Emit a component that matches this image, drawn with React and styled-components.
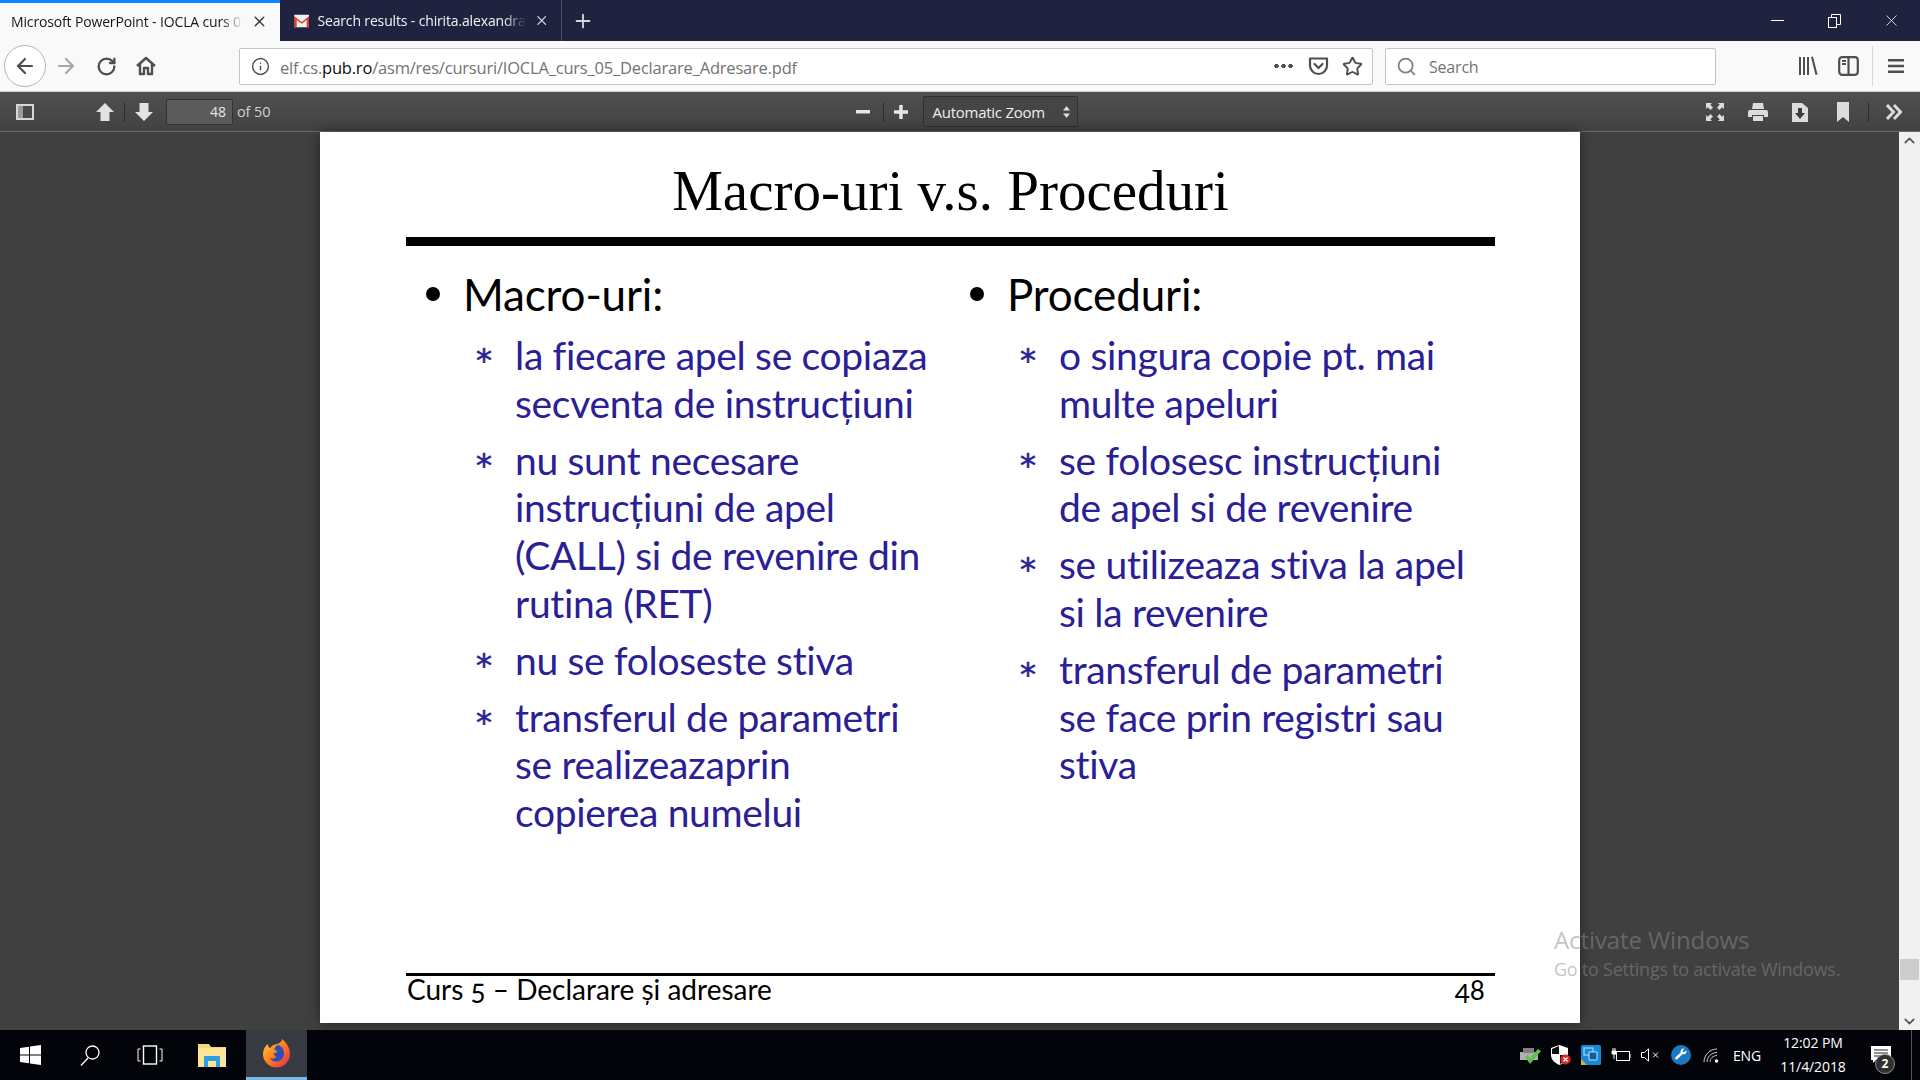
import styled, { createGlobalStyle } from "styled-components";
import { X, Plus, ArrowLeft, ArrowRight, RotateCw, Info, Star, Search, ChevronUp, ChevronDown } from "lucide-react";

const Global = createGlobalStyle`
  html, body { margin: 0; padding: 0; background: #404040; }
  * { box-sizing: border-box; }
`;

const uiFont = `"Open Sans", "Noto Sans", "Liberation Sans", sans-serif`;
const slideFont = `Lato, "Noto Sans", sans-serif`;

const Screen = styled.div`
  width: 1920px;
  height: 1080px;
  position: relative;
  overflow: hidden;
  display: flex;
  flex-direction: column;
  font-family: ${uiFont};
`;

/* tabs */
const TabStrip = styled.div`
  height: 41px;
  flex: none;
  background: #202340;
  display: flex;
  align-items: stretch;
`;
const Tab = styled.div`
  width: ${(p) => (p.$active ? "280px" : "282px")};
  display: flex;
  align-items: center;
  gap: 8px;
  padding: ${(p) => (p.$active ? "0 12px 2px 11px" : "0 12px 0 14px")};
  color: ${(p) => (p.$active ? "#17171a" : "#f2f2f6")};
  background: ${(p) => (p.$active ? "#f9f9fa" : "transparent")};
  border-top: ${(p) => (p.$active ? "3px solid #0a84ff" : "none")};
  border-right: ${(p) => (p.$active ? "none" : "1px solid #4a4d68")};
  font-size: 14px;
`;
const TabTitle = styled.span`
  flex: 1;
  white-space: nowrap;
  letter-spacing: -0.15px;
  -webkit-mask-image: linear-gradient(to left, transparent, #000 22px);
  mask-image: linear-gradient(to left, transparent, #000 22px);
`;
const NewTab = styled.div`
  width: 42px;
  display: flex;
  align-items: center;
  justify-content: center;
  color: #d6d6de;
`;
const WindowControls = styled.div`
  margin-left: auto;
  display: flex;
  align-items: center;
  color: #fff;
`;
const WindowButton = styled.div`
  width: 57px;
  display: flex;
  justify-content: center;
`;

/* nav toolbar */
const NavBar = styled.div`
  height: 51px;
  flex: none;
  background: #f9f9fa;
  border-bottom: 1px solid #d2d2d4;
  display: flex;
  align-items: center;
  padding-left: 4px;
  color: #4e4e52;
`;
const BackButton = styled.div`
  width: 42px;
  height: 42px;
  border-radius: 50%;
  border: 1px solid #b5b5b8;
  background: #fff;
  display: flex;
  align-items: center;
  justify-content: center;
`;
const NavIcon = styled.div`
  width: ${(p) => p.$w || 40}px;
  margin-left: ${(p) => p.$ml || 0}px;
  display: flex;
  justify-content: center;
  color: ${(p) => p.$color || "inherit"};
`;
const UrlBar = styled.div`
  height: 37px;
  background: #fff;
  border: 1px solid #c4c4c6;
  border-radius: 2px;
  display: flex;
  align-items: center;
  width: ${(p) => p.$w}px;
  margin-left: ${(p) => p.$ml}px;
`;
const UrlText = styled.div`
  font-size: 16.5px;
  letter-spacing: -0.2px;
  color: #737373;
  white-space: nowrap;
  flex: 1;
  padding-top: 2px;
  b { font-weight: 400; color: #0c0c0d; }
`;
const SearchText = styled.span`
  margin-left: 6px;
  padding-top: 2px;
  font-size: 16px;
  letter-spacing: -0.2px;
  color: #737373;
`;
const Dots = styled.span`
  width: 20px;
  height: 4px;
  margin-right: 15px;
  background: radial-gradient(circle, #4e4e52 2px, transparent 2.4px) 0 0 / 7px 4px repeat-x;
`;
const PocketSlot = styled.span`
  display: flex;
  margin-right: 3px;
`;
const ToolDivider = styled.div`
  width: 1px;
  height: 40px;
  background: #d8d8da;
  margin: 0 15px 0 4px;
`;

/* pdf toolbar */
const PdfBar = styled.div`
  height: 40px;
  flex: none;
  background: linear-gradient(#505050, #424242);
  border-bottom: 1px solid #6a6a6a;
  display: flex;
  align-items: center;
  color: #d9d9d9;
  font-size: 14px;
`;
const PdfIcon = styled.div`
  display: flex;
  margin-left: ${(p) => p.$ml}px;
`;
const PdfSep = styled.div`
  width: 1px;
  height: 20px;
  background: #2c2c2c;
  margin-left: ${(p) => p.$ml}px;
`;
const PageInput = styled.div`
  width: 67px;
  height: 26px;
  margin-left: 13px;
  background: #5a5a5a;
  border: 1px solid #333;
  border-radius: 2px;
  text-align: right;
  padding-right: 6px;
  line-height: 24px;
  color: #e6e6e6;
`;
const PageCount = styled.span`
  margin-left: 4px;
  color: #cfcfcf;
  font-size: 14.5px;
  letter-spacing: -0.1px;
`;
const ZoomSelect = styled.div`
  width: 155px;
  height: 31px;
  margin-left: 15px;
  background: #454545;
  border: 1px solid #303030;
  border-radius: 2px;
  display: flex;
  align-items: center;
  justify-content: space-between;
  padding: 0 7px 0 8px;
  color: #eee;
  font-size: 15px;
  letter-spacing: -0.25px;
`;

/* viewer */
const Viewer = styled.div`
  flex: 1;
  min-height: 0;
  display: flex;
`;
const Canvas = styled.div`
  flex: 1;
  background: #404040;
  padding-left: 320px;
`;
const Slide = styled.div`
  width: 1260px;
  height: 891px;
  background: #fff;
  box-shadow: 0 0 12px rgba(0, 0, 0, 0.45);
  padding: 0 85px 0 86px;
  display: flex;
  flex-direction: column;
`;
const SlideTitle = styled.h1`
  margin: 29px 0 0;
  height: 76px;
  text-align: center;
  font: 400 57px/60px "Liberation Serif", serif;
  color: #000;
`;
const TitleRule = styled.div`
  height: 9px;
  background: #000;
  flex: none;
`;
const Columns = styled.div`
  display: grid;
  grid-template-columns: 544px 1fr;
  padding-top: 23px;
  flex: 1;
`;
const Heading = styled.div`
  display: flex;
  align-items: center;
  height: 50px;
  color: #000;
  font: 400 44px/50px ${slideFont};
  letter-spacing: -0.15px;
  &::before {
    content: "";
    width: 14px;
    height: 14px;
    border-radius: 50%;
    background: #000;
    margin: 0 23px 0 20px;
  }
`;
const Items = styled.ul`
  list-style: none;
  margin: 13px 0 0;
  padding: 0 0 0 72px;
`;
const Item = styled.li`
  position: relative;
  padding-left: 37px;
  margin-bottom: 9px;
  color: #2a2095;
  font: 400 39px/47.8px ${slideFont};
  letter-spacing: -0.32px;
  white-space: pre;
  &::before {
    content: "*";
    position: absolute;
    left: -2px;
    top: 5px;
    font: 400 32px/47.8px "DejaVu Sans", sans-serif;
    -webkit-text-stroke: 0.6px #2a2095;
  }
`;
const SlideFooter = styled.div`
  border-top: 3px solid #000;
  height: 50px;
  display: flex;
  justify-content: space-between;
  color: #000;
  font: 400 28px/27px ${slideFont};
  font-variant-numeric: oldstyle-nums;
  padding: 0 10px 0 1px;
`;
const Scrollbar = styled.div`
  width: 21px;
  background: #f1f1f1;
  display: flex;
  flex-direction: column;
  justify-content: space-between;
  align-items: center;
  color: #505050;
`;
const ScrollThumb = styled.div`
  width: 19px;
  height: 21px;
  background: #cdcdcd;
  margin-top: auto;
  margin-bottom: 33px;
`;

/* taskbar */
const Taskbar = styled.div`
  height: 50px;
  flex: none;
  background: #03040a;
  display: flex;
  align-items: center;
  color: #fff;
`;
const TaskSlot = styled.div`
  display: flex;
  align-items: center;
  justify-content: center;
  width: ${(p) => p.$w}px;
  margin-left: ${(p) => p.$ml || 0}px;
`;
const ActiveSlot = styled(TaskSlot)`
  height: 50px;
  background: #383a42;
  border-bottom: 3px solid #76b9ed;
`;
const Clock = styled.div`
  width: 90px;
  margin-left: 5px;
  text-align: center;
  font-size: 14px;
  line-height: 24px;
  letter-spacing: -0.1px;
`;
const Lang = styled.span`
  font-size: 14px;
  margin-left: 14px;
  width: 30px;
  letter-spacing: -0.2px;
`;
const NotifySlot = styled(TaskSlot)`
  position: relative;
  height: 30px;
`;
const NotifyBadge = styled.span`
  position: absolute;
  right: 1px;
  bottom: -4px;
  width: 20px;
  height: 20px;
  border-radius: 50%;
  background: #303030;
  border: 1px solid #888;
  font-size: 12px;
  font-weight: 700;
  line-height: 18px;
  text-align: center;
`;
const EdgeLine = styled.div`
  width: 1px;
  height: 50px;
  background: #555;
  margin-left: 15px;
`;

const Watermark = styled.div`
  position: absolute;
  left: 1554px;
  top: 924px;
  color: rgba(140, 140, 140, 0.52);
  pointer-events: none;
  white-space: nowrap;
`;
const WatermarkTitle = styled.div`
  font-size: 24px;
  line-height: 32px;
  letter-spacing: -0.1px;
`;
const WatermarkSub = styled.div`
  font-size: 18px;
  line-height: 26px;
  letter-spacing: -0.25px;
`;

const Gmail = () => (
  <svg width="17" height="14" viewBox="0 0 17 14">
    <rect width="17" height="14" rx="1" fill="#f1f1f1" />
    <path d="M0 1.5 8.5 8 17 1.5V14h-3V5.8L8.5 10 3 5.8V14H0Z" fill="#d6402f" />
  </svg>
);
const Home = () => (
  <svg width="22" height="22" viewBox="0 0 22 22" fill="none" stroke="currentColor" strokeWidth="2.4">
    <path d="M2 11 11 3l9 8M5 9v10h4v-6h4v6h4V9" strokeLinejoin="round" />
  </svg>
);
const Pocket = () => (
  <svg width="21" height="21" viewBox="0 0 21 21" fill="none" stroke="currentColor" strokeWidth="2.2">
    <path d="M2 2.5h17v7a8.5 8.5 0 0 1-17 0Z" strokeLinejoin="round" />
    <path d="m6.5 8 4 4 4-4" strokeLinecap="round" />
  </svg>
);
const Library = () => (
  <svg width="20" height="22" viewBox="0 0 20 22" fill="currentColor">
    <path d="M1 2h2v18H1zM5 2h2v18H5zM9 2h2v18H9zM13 2l2-.5L19.5 19.5l-2 .5z" />
  </svg>
);
const SidebarIcon = () => (
  <svg width="21" height="20" viewBox="0 0 21 20" fill="none" stroke="currentColor" strokeWidth="2.2">
    <rect x="1.2" y="1.2" width="18.6" height="17.6" rx="3" />
    <path d="M10.5 1v18" />
    <path d="M4 5h4M4 8h4" />
  </svg>
);
const Burger = () => (
  <svg width="16" height="16" viewBox="0 0 16 16" fill="currentColor">
    <path d="M0 1h16v2.4H0zM0 6.8h16v2.4H0zM0 12.6h16V15H0z" />
  </svg>
);
const PdfSidebar = () => (
  <svg width="18" height="16" viewBox="0 0 18 16">
    <rect x="1" y="1" width="16" height="14" fill="none" stroke="#d6d6d6" strokeWidth="2" />
    <rect x="2" y="2" width="5" height="12" fill="#9a9a9a" />
  </svg>
);
const UpArrow = () => (
  <svg width="18" height="18" viewBox="0 0 18 18" fill="#e2e2e2">
    <path d="M9 0 18 9h-4.500v9h-9V9H0Z" />
  </svg>
);
const DownArrow = () => (
  <svg width="18" height="18" viewBox="0 0 18 18" fill="#e2e2e2">
    <path d="M9 18 0 9h4.500V0h9v9H18Z" />
  </svg>
);
const Minus = () => (
  <svg width="14" height="14" viewBox="0 0 14 14" fill="#e6e6e6"><rect y="5" width="14" height="3.500" /></svg>
);
const PdfPlus = () => (
  <svg width="14" height="14" viewBox="0 0 14 14" fill="#e6e6e6"><path d="M5.200 0h3.500v5.200H14v3.500H8.700V14H5.200V8.700H0V5.200h5.200Z" /></svg>
);
const SelectArrows = () => (
  <svg width="7" height="12" viewBox="0 0 7 12" fill="#ddd"><path d="M3.500 0 7 4.500H0ZM3.500 12 0 7.500h7Z" /></svg>
);
const Fullscreen = () => (
  <svg width="18" height="18" viewBox="0 0 18 18" fill="#dcdcdc">
    <path d="M0 0h6L4.300 1.800 7 4.500 4.500 7 1.800 4.300 0 6ZM18 0v6l-1.800-1.700L13.500 7 11 4.500l2.700-2.700L12 0ZM0 18v-6l1.800 1.700L4.500 11 7 13.500l-2.700 2.700L6 18ZM18 18h-6l1.700-1.800L11 13.500l2.500-2.500 2.700 2.700L18 12Z" />
  </svg>
);
const Printer = () => (
  <svg width="20" height="18" viewBox="0 0 20 18" fill="#dcdcdc">
    <path d="M5 0h10l1 6H4ZM2 7h16a2 2 0 0 1 2 2v5h-4v-2H4v2H0V9a2 2 0 0 1 2-2ZM5 13h10v5H5Z" />
  </svg>
);
const Download = () => (
  <svg width="16" height="20" viewBox="0 0 16 20">
    <path d="M0 1h10l6 5v14H0Z" fill="#dcdcdc" />
    <path d="M6 6h4v5h3l-5 6-5-6h3Z" fill="#3c3c3c" />
  </svg>
);
const Bookmark = () => (
  <svg width="12" height="20" viewBox="0 0 12 20" fill="#dcdcdc"><path d="M0 0h12v20l-6-5-6 5Z" /></svg>
);
const DoubleChevron = () => (
  <svg width="18" height="16" viewBox="0 0 18 16" fill="none" stroke="#dcdcdc" strokeWidth="3">
    <path d="m2 1 6.500 7L2 15M9 1l6.500 7L9 15" />
  </svg>
);
const WindowsLogo = () => (
  <svg width="21" height="20" viewBox="0 0 21 20" fill="#fff">
    <path d="M0 3 9 1.700V9.500H0ZM10 1.500 21 0v9.500H10ZM0 10.500h9v7.800L0 17ZM10 10.500h11V20l-11-1.500Z" />
  </svg>
);
const TaskSearch = () => (
  <svg width="20" height="21" viewBox="0 0 20 21" fill="none" stroke="#fff" strokeWidth="1.300">
    <circle cx="12.500" cy="7.500" r="6.500" />
    <path d="M8 13 1 20.500" />
  </svg>
);
const TaskView = () => (
  <svg width="26" height="20" viewBox="0 0 26 20" fill="none" stroke="#fff" strokeWidth="1.400">
    <rect x="6.500" y="1" width="13" height="18" />
    <path d="M3.500 4H1v12h2.500M22.500 4H25v12h-2.500" strokeWidth="1" />
  </svg>
);
const Explorer = () => (
  <svg width="28" height="24" viewBox="0 0 28 24">
    <path d="M0 1h11l2 3h15v20H0Z" fill="#f5d77b" />
    <path d="M0 5h28v19H0Z" fill="#fbe59a" />
    <path d="M6 13h16v11h-4v-6h-8v6H6Z" fill="#2f9fe0" />
  </svg>
);
const Firefox = () => (
  <svg width="27" height="29" viewBox="0 0 27 29">
    <defs>
      <linearGradient id="fx" x1="0" y1="0" x2="1" y2="1">
        <stop offset="0" stopColor="#ffd43a" />
        <stop offset="0.5" stopColor="#ff7a1f" />
        <stop offset="1" stopColor="#e22850" />
      </linearGradient>
    </defs>
    <path d="M19 0c5 4 8 9 8 15a13.500 13.500 0 0 1-27 0C0 11 2 7 5 5c0 2 .5 3 2 4 2-3 5-3.500 7-4 3-1 5-2.500 5-5Z" fill="url(#fx)" />
    <path d="M15 6c3 .5 6 4 6 8.500 0 4.500-3.500 8-8 8-3 0-5-1.500-6-3.500 2 1 5 1 6-1 .5-1-2-1.500-2.500-3 1-1.500 4-1 4-3-2 0-3-1-3-2.500C12 8 13 7 15 6Z" fill="#2a4fb8" />
  </svg>
);
const TrayPrinter = () => (
  <svg width="21" height="18" viewBox="0 0 21 18">
    <path d="M0 6h15l3 3v5H0Z" fill="#b0b0b0" />
    <path d="M3 2h11v5H3Z" fill="#808080" />
    <path d="m5 11 2.500-2 2.500 3 8-9 3 2-11 13Z" fill="#62c04d" />
  </svg>
);
const Shield = () => (
  <svg width="20" height="20" viewBox="0 0 20 20">
    <path d="M8.500 0 17 3v7c0 5-4 8-8.500 10C4 18 0 15 0 10V3Z" fill="#fff" />
    <path d="M8 1v8H1V4ZM9 10h7c0 3-3 7-7 9Z" fill="#111" />
    <circle cx="14.500" cy="14.500" r="5" fill="#e3242b" />
    <path d="m12.500 12.500 4 4M16.500 12.500l-4 4" stroke="#fff" strokeWidth="1.400" />
  </svg>
);
const Intel = () => (
  <svg width="20" height="20" viewBox="0 0 20 20">
    <rect width="20" height="20" rx="1.500" fill="#1689d2" />
    <path d="M0 14 6 20H0Z" fill="#d8b03a" />
    <rect x="3" y="3" width="9" height="7" fill="none" stroke="#bfe4fa" strokeWidth="1" />
    <path d="M8 7h8v8H8Z" fill="#0c5f9e" stroke="#bfe4fa" strokeWidth="1" />
  </svg>
);
const Battery = () => (
  <svg width="20" height="14" viewBox="0 0 20 14" fill="none" stroke="#fff" strokeWidth="1">
    <rect x="5.500" y="3.500" width="13" height="9" />
    <path d="M19 6v4" />
    <path d="M2 0v3M4 0v3M1 3h4v3H1ZM3 6v5" fill="#fff" />
  </svg>
);
const Mute = () => (
  <svg width="19" height="14" viewBox="0 0 19 14" fill="none" stroke="#fff" strokeWidth="1">
    <path d="M.5 4.500h3L7.500.8v12.400l-4-3.700h-3Z" />
    <path d="m12 4.500 5 5M17 4.500l-5 5" />
  </svg>
);
const Wrench = () => (
  <svg width="20" height="20" viewBox="0 0 20 20">
    <circle cx="10" cy="10" r="10" fill="#1c78c0" />
    <path d="M15.500 5.500a3 3 0 0 1-3.800 3.600L6.500 14a1.300 1.300 0 0 1-2-1.700l5.200-4.900a3 3 0 0 1 3.600-3.700L11.500 6l1 1.300Z" fill="#fff" />
  </svg>
);
const Wifi = () => (
  <svg width="16" height="16" viewBox="0 0 16 16" fill="none" stroke="#cfcfcf" strokeWidth="1">
    <path d="M1 15C1 8 7 2 14 2M4 15c0-5 4.500-9.500 10-9.500M7 15c0-3.500 3-6.500 7-6.500" />
    <circle cx="13.500" cy="14" r="1.700" fill="#fff" stroke="none" />
  </svg>
);
const Notify = () => (
  <svg width="20" height="18" viewBox="0 0 20 18">
    <path d="M0 0h20v14H5l-3 3v-3H0Z" fill="#fff" />
    <path d="M3 4h14M3 7h14M3 10h9" stroke="#222" strokeWidth="1" />
  </svg>
);

const leftItems = [
  "la fiecare apel se copiaza\nsecventa de instrucțiuni",
  "nu sunt necesare\ninstrucțiuni de apel\n(CALL) si de revenire din\nrutina (RET)",
  "nu se foloseste stiva",
  "transferul de parametri\nse realizeazaprin\ncopierea numelui",
];
const rightItems = [
  "o singura copie pt. mai\nmulte apeluri",
  "se folosesc instrucțiuni\nde apel si de revenire",
  "se utilizeaza stiva la apel\nsi la revenire",
  "transferul de parametri\nse face prin registri sau\nstiva",
];

const App = () => {
  return (
    <Screen>
      <Global />
      <TabStrip>
        <Tab $active>
          <TabTitle>Microsoft PowerPoint - IOCLA curs 0</TabTitle>
          <X size={17} strokeWidth={2} color="#3a3a3e" />
        </Tab>
        <Tab>
          <Gmail />
          <TabTitle>Search results - chirita.alexandra</TabTitle>
          <X size={17} strokeWidth={2} color="#d8d8de" />
        </Tab>
        <NewTab>
          <Plus size={22} strokeWidth={2} />
        </NewTab>
        <WindowControls>
          <WindowButton>
            <svg width="13" height="2" viewBox="0 0 13 2" fill="#fff"><rect width="13" height="1" /></svg>
          </WindowButton>
          <WindowButton>
            <svg width="13" height="14" viewBox="0 0 13 14" fill="none" stroke="#fff"><rect x="0.500" y="3.500" width="8" height="10" /><path d="M3.500 3.500v-3h9v10h-4" /></svg>
          </WindowButton>
          <WindowButton>
            <X size={19} strokeWidth={1} />
          </WindowButton>
        </WindowControls>
      </TabStrip>

      <NavBar>
        <BackButton>
          <ArrowLeft size={24} strokeWidth={2.2} />
        </BackButton>
        <NavIcon $color="#a8a8aa"><ArrowRight size={24} strokeWidth={2.2} /></NavIcon>
        <NavIcon><RotateCw size={21} strokeWidth={2.6} /></NavIcon>
        <NavIcon><Home /></NavIcon>
        <UrlBar $w={1134} $ml={73}>
          <NavIcon><Info size={19} strokeWidth={1.8} /></NavIcon>
          <UrlText>
            elf.cs.<b>pub.ro</b>/asm/res/cursuri/IOCLA_curs_05_Declarare_Adresare.pdf
          </UrlText>
          <Dots />
          <PocketSlot><Pocket /></PocketSlot>
          <NavIcon><Star size={21} strokeWidth={2.2} /></NavIcon>
        </UrlBar>
        <UrlBar $w={331} $ml={12}>
          <NavIcon $w={34} $ml={3}><Search size={21} strokeWidth={2} color="#808080" /></NavIcon>
          <SearchText>Search</SearchText>
        </UrlBar>
        <NavIcon $w={30} $ml={77}><Library /></NavIcon>
        <NavIcon $ml={5}><SidebarIcon /></NavIcon>
        <ToolDivider />
        <Burger />
      </NavBar>

      <PdfBar>
        <PdfIcon $ml={16}><PdfSidebar /></PdfIcon>
        <PdfIcon $ml={62}><UpArrow /></PdfIcon>
        <PdfSep $ml={10} />
        <PdfIcon $ml={10}><DownArrow /></PdfIcon>
        <PageInput>48</PageInput>
        <PageCount>of 50</PageCount>
        <PdfIcon $ml={586}><Minus /></PdfIcon>
        <PdfSep $ml={13} />
        <PdfIcon $ml={10}><PdfPlus /></PdfIcon>
        <ZoomSelect>
          Automatic Zoom
          <SelectArrows />
        </ZoomSelect>
        <PdfIcon $ml={628}><Fullscreen /></PdfIcon>
        <PdfIcon $ml={24}><Printer /></PdfIcon>
        <PdfIcon $ml={24}><Download /></PdfIcon>
        <PdfIcon $ml={29}><Bookmark /></PdfIcon>
        <PdfSep $ml={19} />
        <PdfIcon $ml={16}><DoubleChevron /></PdfIcon>
      </PdfBar>

      <Viewer>
        <Canvas>
          <Slide>
            <SlideTitle>Macro-uri v.s. Proceduri</SlideTitle>
            <TitleRule />
            <Columns>
              <div>
                <Heading>Macro-uri:</Heading>
                <Items>
                  {leftItems.map((t) => <Item key={t}>{t}</Item>)}
                </Items>
              </div>
              <div>
                <Heading>Proceduri:</Heading>
                <Items>
                  {rightItems.map((t) => <Item key={t}>{t}</Item>)}
                </Items>
              </div>
            </Columns>
            <SlideFooter>
              <span>Curs 5 – Declarare și adresare</span>
              <span>48</span>
            </SlideFooter>
          </Slide>
        </Canvas>
        <Scrollbar>
          <ChevronUp size={17} strokeWidth={2.2} />
          <ScrollThumb />
          <ChevronDown size={17} strokeWidth={2.2} />
        </Scrollbar>
      </Viewer>

      <Taskbar>
        <TaskSlot $w={60}><WindowsLogo /></TaskSlot>
        <TaskSlot $w={60}><TaskSearch /></TaskSlot>
        <TaskSlot $w={60}><TaskView /></TaskSlot>
        <TaskSlot $w={64}><Explorer /></TaskSlot>
        <ActiveSlot $w={61} $ml={2}><Firefox /></ActiveSlot>
        <TaskSlot $w={21} $ml={1213}><TrayPrinter /></TaskSlot>
        <TaskSlot $w={20} $ml={10}><Shield /></TaskSlot>
        <TaskSlot $w={20} $ml={10}><Intel /></TaskSlot>
        <TaskSlot $w={20} $ml={10}><Battery /></TaskSlot>
        <TaskSlot $w={19} $ml={10}><Mute /></TaskSlot>
        <TaskSlot $w={20} $ml={11}><Wrench /></TaskSlot>
        <TaskSlot $w={16} $ml={12}><Wifi /></TaskSlot>
        <Lang>ENG</Lang>
        <Clock>12:02 PM<br />11/4/2018</Clock>
        <NotifySlot $w={30} $ml={8}>
          <Notify />
          <NotifyBadge>2</NotifyBadge>
        </NotifySlot>
        <EdgeLine />
      </Taskbar>

      <Watermark>
        <WatermarkTitle>Activate Windows</WatermarkTitle>
        <WatermarkSub>Go to Settings to activate Windows.</WatermarkSub>
      </Watermark>
    </Screen>
  );
};

export default App;
